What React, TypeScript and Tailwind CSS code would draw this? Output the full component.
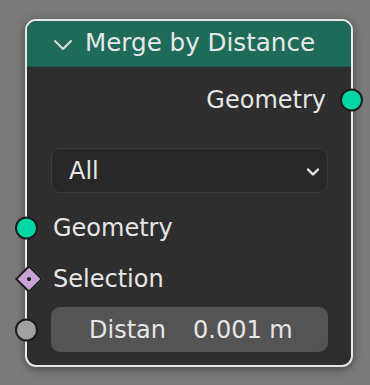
import React from "react";

const font = { fontFamily: '"DejaVu Sans", "Liberation Sans", sans-serif' };

export default function App() {
  return (
    <div className="w-[370px] h-[385px] bg-[#7b7b7b] overflow-hidden pt-[19px] pl-[25px]" style={font}>
      <div className="relative w-[328px] h-[348px] rounded-[11px] border-2 border-[#e8e8e8] bg-[#2e2e2e] shadow-[0_2px_10px_rgba(0,0,0,0.45)] flex flex-col">
        {/* header */}
        <div className="h-[46px] shrink-0 bg-[#1e6b59] rounded-t-[9px] border-b border-[#185a4a] flex items-center pl-[25px] text-[24.6px] text-[#e8e8e8]">
          <svg width="22" height="14" viewBox="0 0 22 14" className="mr-[11px] mt-[2px]">
            <path d="M3 3 L11 11 L19 3" stroke="#dedede" strokeWidth="2" fill="none" strokeLinecap="round" strokeLinejoin="round" />
          </svg>
          <span className="leading-none">Merge by Distance</span>
        </div>
        {/* body */}
        <div className="flex flex-col px-[23px] pl-[24px] pt-[16px]">
          {/* output row */}
          <div className="relative h-[34px] flex items-center justify-end pr-[2px] text-[24px] text-[#e6e6e6]">
            <span className="leading-none">Geometry</span>
            <div className="absolute right-[-35px] top-1/2 -translate-y-1/2 w-[23px] h-[23px] rounded-full bg-[#00d6a3] border-2 border-[#1c1c1c]" />
          </div>
          {/* dropdown */}
          <div className="mt-[31px] h-[45px] rounded-[9px] bg-[#282828] border border-[#3b3b3b] flex items-center justify-between pl-[17px] pr-[6px] text-[24px] text-[#e6e6e6]">
            <span className="leading-none">All</span>
            <svg width="16" height="12" viewBox="0 0 16 12" className="mt-[2px]">
              <path d="M3 3.5 L8 8.5 L13 3.5" stroke="#e6e6e6" strokeWidth="2.4" fill="none" strokeLinecap="round" strokeLinejoin="round" />
            </svg>
          </div>
          {/* geometry input */}
          <div className="relative mt-[18px] h-[34px] flex items-center pl-[2px] text-[24px] text-[#e6e6e6]">
            <div className="absolute left-[-36px] top-1/2 -translate-y-1/2 w-[23px] h-[23px] rounded-full bg-[#00d6a3] border-2 border-[#1c1c1c]" />
            <span className="leading-none">Geometry</span>
          </div>
          {/* selection */}
          <div className="relative mt-[17px] h-[34px] flex items-center pl-[2px] text-[24px] text-[#e6e6e6]">
            <div className="absolute left-[-32px] top-1/2 -translate-y-1/2 w-[20px] h-[20px] rotate-45 bg-[#c9a2d8] border-2 border-[#1c1c1c] flex items-center justify-center">
              <div className="w-[4px] h-[4px] rounded-full bg-[#1c1c1c]" />
            </div>
            <span className="leading-none">Selection</span>
          </div>
          {/* distance field */}
          <div className="relative mt-[11px] h-[45px] rounded-[9px] bg-[#545454] flex items-center pl-[38px] gap-[27px] text-[24px] text-[#e6e6e6]">
            <div className="absolute left-[-36px] top-1/2 -translate-y-1/2 w-[23px] h-[23px] rounded-full bg-[#a1a1a1] border-2 border-[#1c1c1c]" />
            <span className="leading-none">Distan</span>
            <span className="leading-none">0.001 m</span>
          </div>
        </div>
      </div>
    </div>
  );
}
